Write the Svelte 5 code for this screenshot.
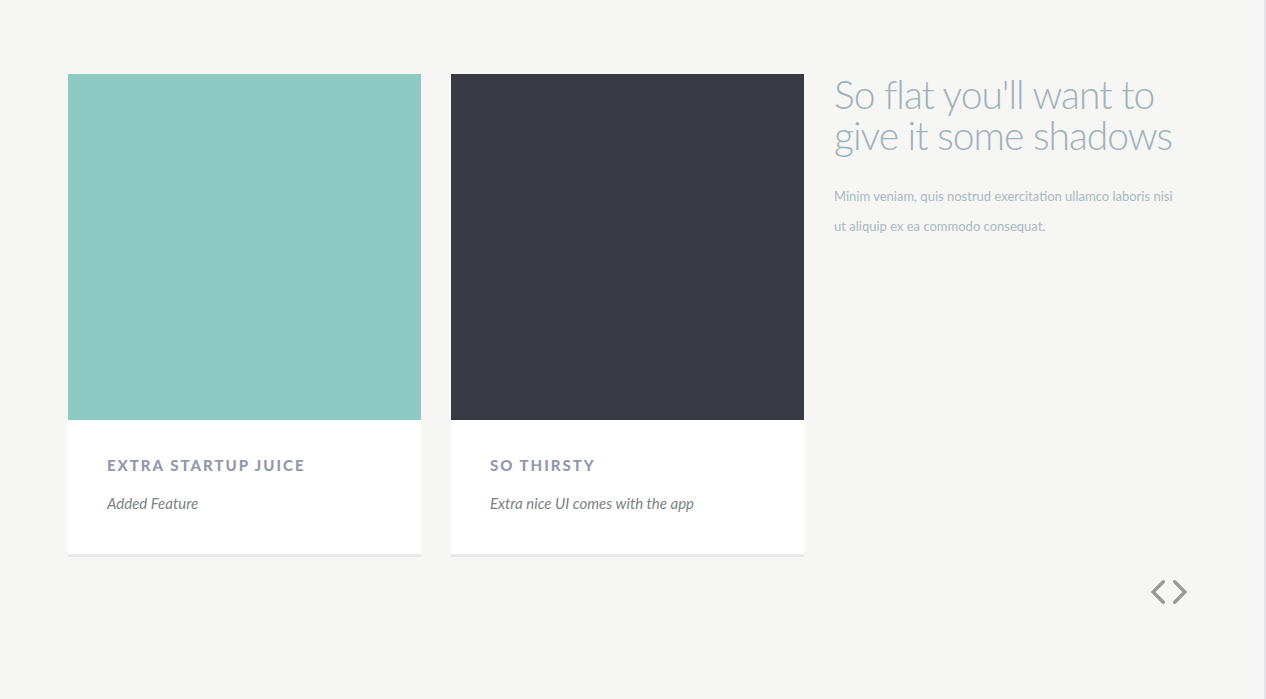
<script lang="ts">
  const cards = [
    { title: 'Extra Startup Juice', text: 'Added Feature', tone: 'teal' },
    { title: 'So Thirsty', text: 'Extra nice UI comes with the app', tone: 'slate' },
  ];
</script>

<main class="section">
  <div class="grid">
    {#each cards as card}
      <article class="card">
        <div class="cover {card.tone}"></div>
        <div class="body">
          <h3>{card.title}</h3>
          <p>{card.text}</p>
        </div>
      </article>
    {/each}
    <header class="intro">
      <h1>So flat you'll want to give it some shadows</h1>
      <p>Minim veniam, quis nostrud exercitation ullamco laboris nisi ut aliquip ex ea commodo consequat.</p>
    </header>
  </div>
  <nav class="pager" aria-label="Slides">
    <button type="button" aria-label="Previous">
      <svg width="14" height="24" viewBox="0 0 14 24"><path d="M12.3 1.8 2.1 12 12.3 22.2" /></svg>
    </button>
    <button type="button" aria-label="Next">
      <svg width="14" height="24" viewBox="0 0 14 24"><path d="M1.7 1.8 11.9 12 1.7 22.2" /></svg>
    </button>
  </nav>
</main>

<style>
  :global(body) {
    background: #f6f6f4;
  }
  .section {
    box-sizing: border-box;
    min-height: 100vh;
    padding: 74px 77px 74px 68px;
    border-right: 2px solid #e6e6e8;
    font-family: Lato, 'Liberation Sans', sans-serif;
  }
  .grid {
    display: grid;
    grid-template-columns: repeat(3, minmax(0, 1fr));
    gap: 30px;
    align-items: start;
  }
  .card {
    background: #fff;
    border-bottom: 3px solid #e9e9e9;
  }
  .cover {
    height: 346px;
  }
  .teal {
    background: #8fc9c4;
  }
  .slate {
    background: #373a43;
  }
  .body {
    padding: 35px 39px 40px;
  }
  h3 {
    margin: 0 0 17px;
    font-size: 15px;
    line-height: 20px;
    font-weight: 900;
    letter-spacing: 2px;
    text-transform: uppercase;
    color: #9299ac;
  }
  .body p {
    margin: 0;
    font-size: 15px;
    line-height: 22px;
    font-style: italic;
    color: #7a8284;
  }
  .intro {
    color: #a9b9c0;
  }
  h1 {
    margin: 0 0 25px;
    font-size: 39px;
    line-height: 41px;
    font-weight: 300;
    letter-spacing: -1px;
    color: #9fb1b9;
  }
  .intro p {
    margin: 0;
    font-size: 13px;
    line-height: 30px;
  }
  .pager {
    display: flex;
    justify-content: flex-end;
    gap: 8px;
    margin-top: 23px;
  }
  button {
    padding: 0;
    border: 0;
    background: none;
    cursor: pointer;
  }
  svg {
    display: block;
    fill: none;
    stroke: #999;
    stroke-width: 3.4;
    stroke-linecap: round;
  }
</style>
